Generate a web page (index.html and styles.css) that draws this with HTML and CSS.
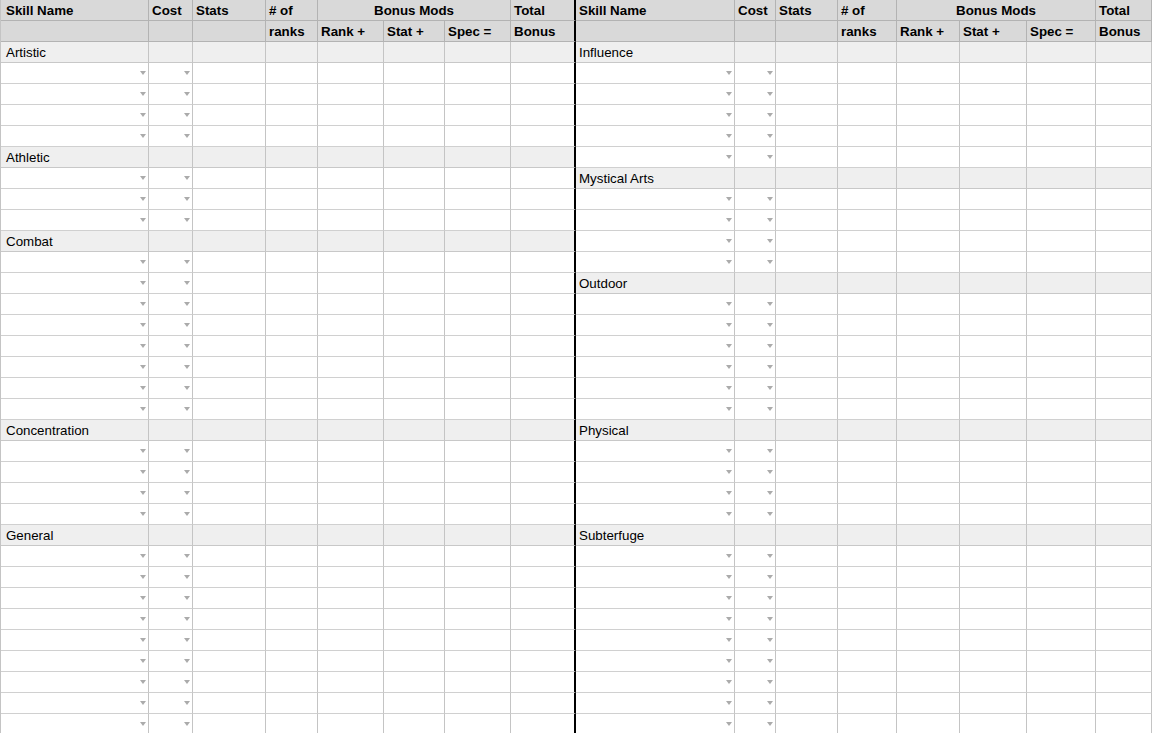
FILE: index.html
```html
<!DOCTYPE html>
<html>
<head>
<meta charset="utf-8">
<title>Skills</title>
<link rel="stylesheet" href="styles.css">
</head>
<body>
<div class="page">
  <div class="sheet left">
    <div class="r hd"><div class="c">Skill Name</div><div class="c">Cost</div><div class="c">Stats</div><div class="c"># of</div><div class="c span3">Bonus Mods</div><div class="c">Total</div></div>
    <div class="r hd"><div class="c"></div><div class="c"></div><div class="c"></div><div class="c">ranks</div><div class="c">Rank +</div><div class="c">Stat +</div><div class="c">Spec =</div><div class="c">Bonus</div></div>

    <div class="r cat"><div class="c">Artistic</div><div class="c"></div><div class="c"></div><div class="c"></div><div class="c"></div><div class="c"></div><div class="c"></div><div class="c"></div></div>
    <div class="r"><div class="c dd"></div><div class="c dd"></div><div class="c"></div><div class="c"></div><div class="c"></div><div class="c"></div><div class="c"></div><div class="c"></div></div>
    <div class="r"><div class="c dd"></div><div class="c dd"></div><div class="c"></div><div class="c"></div><div class="c"></div><div class="c"></div><div class="c"></div><div class="c"></div></div>
    <div class="r"><div class="c dd"></div><div class="c dd"></div><div class="c"></div><div class="c"></div><div class="c"></div><div class="c"></div><div class="c"></div><div class="c"></div></div>
    <div class="r"><div class="c dd"></div><div class="c dd"></div><div class="c"></div><div class="c"></div><div class="c"></div><div class="c"></div><div class="c"></div><div class="c"></div></div>

    <div class="r cat"><div class="c">Athletic</div><div class="c"></div><div class="c"></div><div class="c"></div><div class="c"></div><div class="c"></div><div class="c"></div><div class="c"></div></div>
    <div class="r"><div class="c dd"></div><div class="c dd"></div><div class="c"></div><div class="c"></div><div class="c"></div><div class="c"></div><div class="c"></div><div class="c"></div></div>
    <div class="r"><div class="c dd"></div><div class="c dd"></div><div class="c"></div><div class="c"></div><div class="c"></div><div class="c"></div><div class="c"></div><div class="c"></div></div>
    <div class="r"><div class="c dd"></div><div class="c dd"></div><div class="c"></div><div class="c"></div><div class="c"></div><div class="c"></div><div class="c"></div><div class="c"></div></div>

    <div class="r cat"><div class="c">Combat</div><div class="c"></div><div class="c"></div><div class="c"></div><div class="c"></div><div class="c"></div><div class="c"></div><div class="c"></div></div>
    <div class="r"><div class="c dd"></div><div class="c dd"></div><div class="c"></div><div class="c"></div><div class="c"></div><div class="c"></div><div class="c"></div><div class="c"></div></div>
    <div class="r"><div class="c dd"></div><div class="c dd"></div><div class="c"></div><div class="c"></div><div class="c"></div><div class="c"></div><div class="c"></div><div class="c"></div></div>
    <div class="r"><div class="c dd"></div><div class="c dd"></div><div class="c"></div><div class="c"></div><div class="c"></div><div class="c"></div><div class="c"></div><div class="c"></div></div>
    <div class="r"><div class="c dd"></div><div class="c dd"></div><div class="c"></div><div class="c"></div><div class="c"></div><div class="c"></div><div class="c"></div><div class="c"></div></div>
    <div class="r"><div class="c dd"></div><div class="c dd"></div><div class="c"></div><div class="c"></div><div class="c"></div><div class="c"></div><div class="c"></div><div class="c"></div></div>
    <div class="r"><div class="c dd"></div><div class="c dd"></div><div class="c"></div><div class="c"></div><div class="c"></div><div class="c"></div><div class="c"></div><div class="c"></div></div>
    <div class="r"><div class="c dd"></div><div class="c dd"></div><div class="c"></div><div class="c"></div><div class="c"></div><div class="c"></div><div class="c"></div><div class="c"></div></div>
    <div class="r"><div class="c dd"></div><div class="c dd"></div><div class="c"></div><div class="c"></div><div class="c"></div><div class="c"></div><div class="c"></div><div class="c"></div></div>

    <div class="r cat"><div class="c">Concentration</div><div class="c"></div><div class="c"></div><div class="c"></div><div class="c"></div><div class="c"></div><div class="c"></div><div class="c"></div></div>
    <div class="r"><div class="c dd"></div><div class="c dd"></div><div class="c"></div><div class="c"></div><div class="c"></div><div class="c"></div><div class="c"></div><div class="c"></div></div>
    <div class="r"><div class="c dd"></div><div class="c dd"></div><div class="c"></div><div class="c"></div><div class="c"></div><div class="c"></div><div class="c"></div><div class="c"></div></div>
    <div class="r"><div class="c dd"></div><div class="c dd"></div><div class="c"></div><div class="c"></div><div class="c"></div><div class="c"></div><div class="c"></div><div class="c"></div></div>
    <div class="r"><div class="c dd"></div><div class="c dd"></div><div class="c"></div><div class="c"></div><div class="c"></div><div class="c"></div><div class="c"></div><div class="c"></div></div>

    <div class="r cat"><div class="c">General</div><div class="c"></div><div class="c"></div><div class="c"></div><div class="c"></div><div class="c"></div><div class="c"></div><div class="c"></div></div>
    <div class="r"><div class="c dd"></div><div class="c dd"></div><div class="c"></div><div class="c"></div><div class="c"></div><div class="c"></div><div class="c"></div><div class="c"></div></div>
    <div class="r"><div class="c dd"></div><div class="c dd"></div><div class="c"></div><div class="c"></div><div class="c"></div><div class="c"></div><div class="c"></div><div class="c"></div></div>
    <div class="r"><div class="c dd"></div><div class="c dd"></div><div class="c"></div><div class="c"></div><div class="c"></div><div class="c"></div><div class="c"></div><div class="c"></div></div>
    <div class="r"><div class="c dd"></div><div class="c dd"></div><div class="c"></div><div class="c"></div><div class="c"></div><div class="c"></div><div class="c"></div><div class="c"></div></div>
    <div class="r"><div class="c dd"></div><div class="c dd"></div><div class="c"></div><div class="c"></div><div class="c"></div><div class="c"></div><div class="c"></div><div class="c"></div></div>
    <div class="r"><div class="c dd"></div><div class="c dd"></div><div class="c"></div><div class="c"></div><div class="c"></div><div class="c"></div><div class="c"></div><div class="c"></div></div>
    <div class="r"><div class="c dd"></div><div class="c dd"></div><div class="c"></div><div class="c"></div><div class="c"></div><div class="c"></div><div class="c"></div><div class="c"></div></div>
    <div class="r"><div class="c dd"></div><div class="c dd"></div><div class="c"></div><div class="c"></div><div class="c"></div><div class="c"></div><div class="c"></div><div class="c"></div></div>
    <div class="r"><div class="c dd"></div><div class="c dd"></div><div class="c"></div><div class="c"></div><div class="c"></div><div class="c"></div><div class="c"></div><div class="c"></div></div>
  </div>

  <div class="sheet right">
    <div class="r hd"><div class="c">Skill Name</div><div class="c">Cost</div><div class="c">Stats</div><div class="c"># of</div><div class="c span3">Bonus Mods</div><div class="c">Total</div></div>
    <div class="r hd"><div class="c"></div><div class="c"></div><div class="c"></div><div class="c">ranks</div><div class="c">Rank +</div><div class="c">Stat +</div><div class="c">Spec =</div><div class="c">Bonus</div></div>

    <div class="r cat"><div class="c">Influence</div><div class="c"></div><div class="c"></div><div class="c"></div><div class="c"></div><div class="c"></div><div class="c"></div><div class="c"></div></div>
    <div class="r"><div class="c dd"></div><div class="c dd"></div><div class="c"></div><div class="c"></div><div class="c"></div><div class="c"></div><div class="c"></div><div class="c"></div></div>
    <div class="r"><div class="c dd"></div><div class="c dd"></div><div class="c"></div><div class="c"></div><div class="c"></div><div class="c"></div><div class="c"></div><div class="c"></div></div>
    <div class="r"><div class="c dd"></div><div class="c dd"></div><div class="c"></div><div class="c"></div><div class="c"></div><div class="c"></div><div class="c"></div><div class="c"></div></div>
    <div class="r"><div class="c dd"></div><div class="c dd"></div><div class="c"></div><div class="c"></div><div class="c"></div><div class="c"></div><div class="c"></div><div class="c"></div></div>
    <div class="r"><div class="c dd"></div><div class="c dd"></div><div class="c"></div><div class="c"></div><div class="c"></div><div class="c"></div><div class="c"></div><div class="c"></div></div>

    <div class="r cat"><div class="c">Mystical Arts</div><div class="c"></div><div class="c"></div><div class="c"></div><div class="c"></div><div class="c"></div><div class="c"></div><div class="c"></div></div>
    <div class="r"><div class="c dd"></div><div class="c dd"></div><div class="c"></div><div class="c"></div><div class="c"></div><div class="c"></div><div class="c"></div><div class="c"></div></div>
    <div class="r"><div class="c dd"></div><div class="c dd"></div><div class="c"></div><div class="c"></div><div class="c"></div><div class="c"></div><div class="c"></div><div class="c"></div></div>
    <div class="r"><div class="c dd"></div><div class="c dd"></div><div class="c"></div><div class="c"></div><div class="c"></div><div class="c"></div><div class="c"></div><div class="c"></div></div>
    <div class="r"><div class="c dd"></div><div class="c dd"></div><div class="c"></div><div class="c"></div><div class="c"></div><div class="c"></div><div class="c"></div><div class="c"></div></div>

    <div class="r cat"><div class="c">Outdoor</div><div class="c"></div><div class="c"></div><div class="c"></div><div class="c"></div><div class="c"></div><div class="c"></div><div class="c"></div></div>
    <div class="r"><div class="c dd"></div><div class="c dd"></div><div class="c"></div><div class="c"></div><div class="c"></div><div class="c"></div><div class="c"></div><div class="c"></div></div>
    <div class="r"><div class="c dd"></div><div class="c dd"></div><div class="c"></div><div class="c"></div><div class="c"></div><div class="c"></div><div class="c"></div><div class="c"></div></div>
    <div class="r"><div class="c dd"></div><div class="c dd"></div><div class="c"></div><div class="c"></div><div class="c"></div><div class="c"></div><div class="c"></div><div class="c"></div></div>
    <div class="r"><div class="c dd"></div><div class="c dd"></div><div class="c"></div><div class="c"></div><div class="c"></div><div class="c"></div><div class="c"></div><div class="c"></div></div>
    <div class="r"><div class="c dd"></div><div class="c dd"></div><div class="c"></div><div class="c"></div><div class="c"></div><div class="c"></div><div class="c"></div><div class="c"></div></div>
    <div class="r"><div class="c dd"></div><div class="c dd"></div><div class="c"></div><div class="c"></div><div class="c"></div><div class="c"></div><div class="c"></div><div class="c"></div></div>

    <div class="r cat"><div class="c">Physical</div><div class="c"></div><div class="c"></div><div class="c"></div><div class="c"></div><div class="c"></div><div class="c"></div><div class="c"></div></div>
    <div class="r"><div class="c dd"></div><div class="c dd"></div><div class="c"></div><div class="c"></div><div class="c"></div><div class="c"></div><div class="c"></div><div class="c"></div></div>
    <div class="r"><div class="c dd"></div><div class="c dd"></div><div class="c"></div><div class="c"></div><div class="c"></div><div class="c"></div><div class="c"></div><div class="c"></div></div>
    <div class="r"><div class="c dd"></div><div class="c dd"></div><div class="c"></div><div class="c"></div><div class="c"></div><div class="c"></div><div class="c"></div><div class="c"></div></div>
    <div class="r"><div class="c dd"></div><div class="c dd"></div><div class="c"></div><div class="c"></div><div class="c"></div><div class="c"></div><div class="c"></div><div class="c"></div></div>

    <div class="r cat"><div class="c">Subterfuge</div><div class="c"></div><div class="c"></div><div class="c"></div><div class="c"></div><div class="c"></div><div class="c"></div><div class="c"></div></div>
    <div class="r"><div class="c dd"></div><div class="c dd"></div><div class="c"></div><div class="c"></div><div class="c"></div><div class="c"></div><div class="c"></div><div class="c"></div></div>
    <div class="r"><div class="c dd"></div><div class="c dd"></div><div class="c"></div><div class="c"></div><div class="c"></div><div class="c"></div><div class="c"></div><div class="c"></div></div>
    <div class="r"><div class="c dd"></div><div class="c dd"></div><div class="c"></div><div class="c"></div><div class="c"></div><div class="c"></div><div class="c"></div><div class="c"></div></div>
    <div class="r"><div class="c dd"></div><div class="c dd"></div><div class="c"></div><div class="c"></div><div class="c"></div><div class="c"></div><div class="c"></div><div class="c"></div></div>
    <div class="r"><div class="c dd"></div><div class="c dd"></div><div class="c"></div><div class="c"></div><div class="c"></div><div class="c"></div><div class="c"></div><div class="c"></div></div>
    <div class="r"><div class="c dd"></div><div class="c dd"></div><div class="c"></div><div class="c"></div><div class="c"></div><div class="c"></div><div class="c"></div><div class="c"></div></div>
    <div class="r"><div class="c dd"></div><div class="c dd"></div><div class="c"></div><div class="c"></div><div class="c"></div><div class="c"></div><div class="c"></div><div class="c"></div></div>
    <div class="r"><div class="c dd"></div><div class="c dd"></div><div class="c"></div><div class="c"></div><div class="c"></div><div class="c"></div><div class="c"></div><div class="c"></div></div>
    <div class="r"><div class="c dd"></div><div class="c dd"></div><div class="c"></div><div class="c"></div><div class="c"></div><div class="c"></div><div class="c"></div><div class="c"></div></div>
  </div>
</div>
</body>
</html>
```

FILE: styles.css
```css
html, body {
  margin: 0;
  padding: 0;
  background: #ffffff;
  overflow: hidden;
}

body {
  font-family: "Liberation Sans", Arial, sans-serif;
  font-size: 13.333px;
  color: #000000;
}

.page {
  display: flex;
  width: 1152px;
  height: 733px;
  overflow: hidden;
}

.sheet {
  display: flex;
  flex-direction: column;
  flex: none;
}

.left {
  width: 576px;
  border-left: 1px solid #c4c4c4;
  box-sizing: border-box;
}

.right {
  width: 576px;
}

.r {
  display: grid;
  height: 21px;
  flex: none;
}

.left .r {
  grid-template-columns: 148px 44px 73px 52px 66px 61px 66px 65px;
}

.right .r {
  grid-template-columns: 159px 41px 62px 59px 63px 67px 69px 56px;
}

.c {
  box-sizing: border-box;
  height: 21px;
  min-width: 0;
  padding-left: 3px;
  padding-top: 1px;
  line-height: 20px;
  white-space: nowrap;
  border-right: 1px solid #c4c4c4;
  border-bottom: 1px solid #d0d0d0;
}

.left .c:first-child {
  padding-left: 5px;
}

.left .c:last-child {
  border-right: 2px solid #000000;
}

.hd {
  background: #d9d9d9;
}

.hd .c {
  font-weight: bold;
  border-right-color: #b3b3b3;
  border-bottom-color: #b3b3b3;
}

.left .hd .c:last-child {
  border-right-color: #000000;
}

.span3 {
  grid-column: span 3;
  text-align: center;
  padding-left: 0;
}

.cat {
  background: #efefef;
}

.cat .c {
  border-bottom-color: #c8c8c8;
}

.dd {
  display: flex;
  justify-content: flex-end;
  align-items: center;
  padding-top: 0;
  padding-right: 2px;
}

.dd::after {
  content: "";
  width: 0;
  height: 0;
  border-left: 3.5px solid transparent;
  border-right: 3.5px solid transparent;
  border-top: 4px solid #ababab;
}
```
